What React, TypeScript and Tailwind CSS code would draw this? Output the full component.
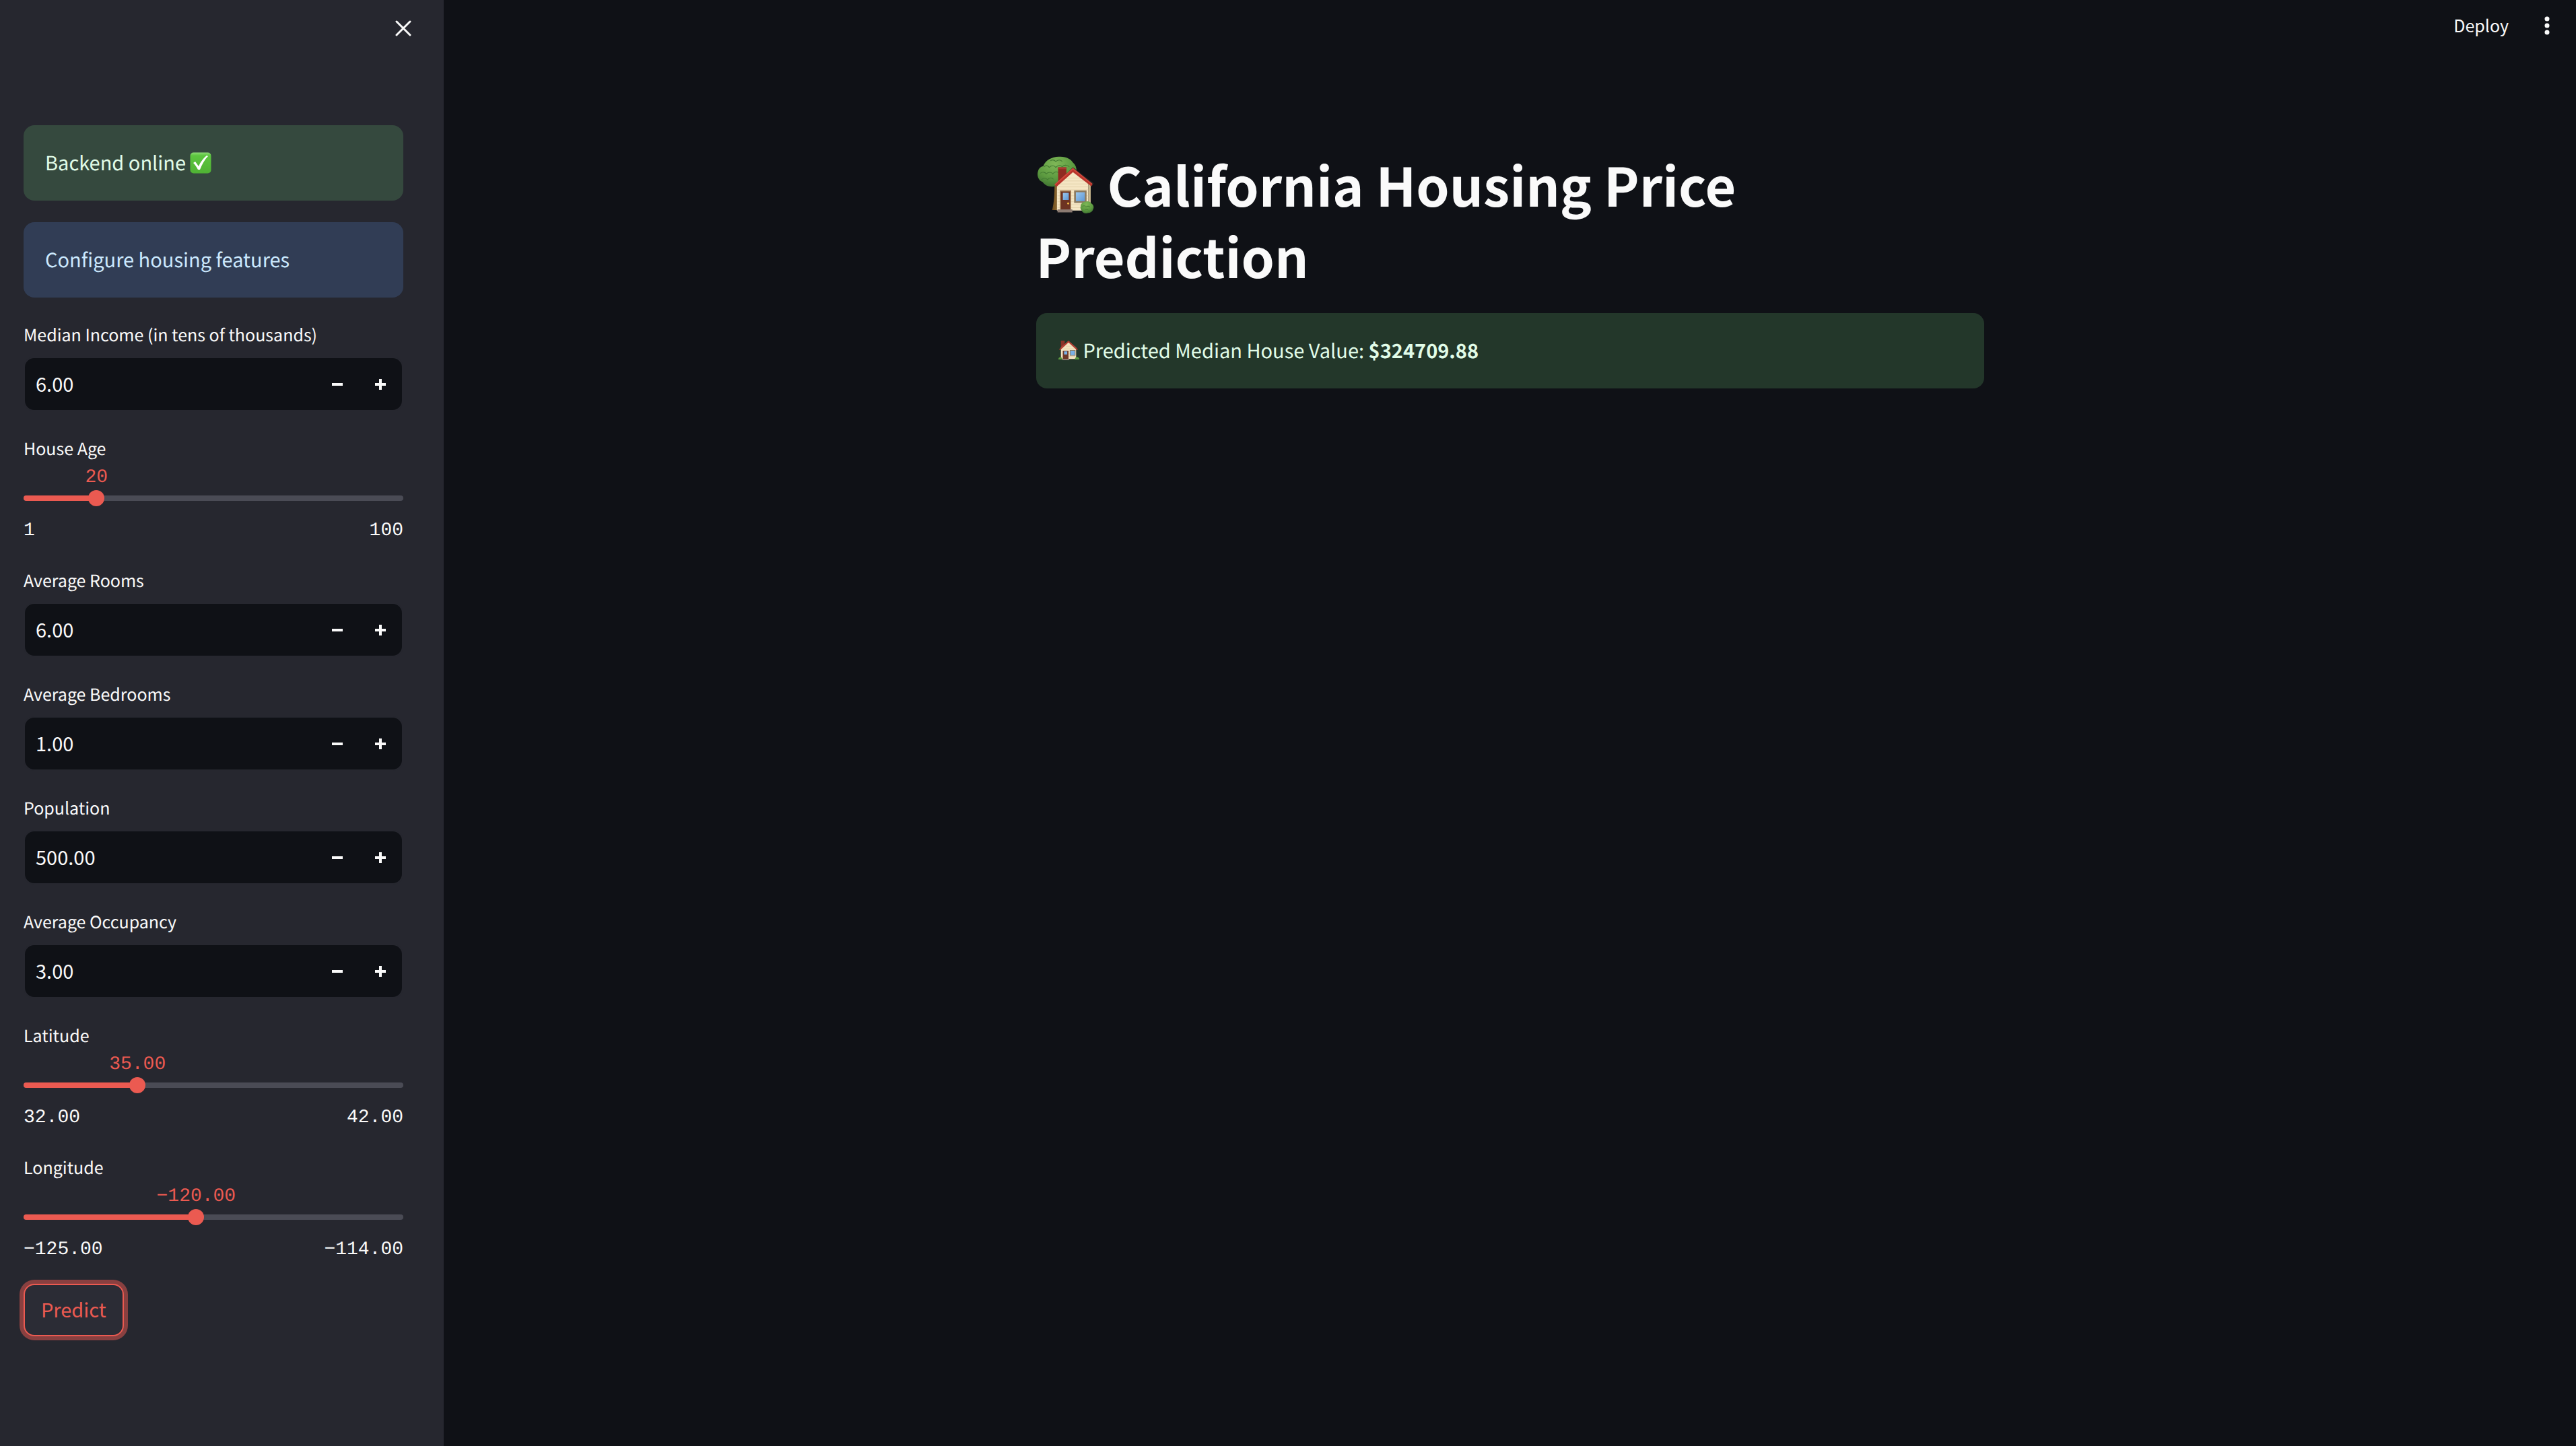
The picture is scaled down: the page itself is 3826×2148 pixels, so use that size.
import { useId, useState, type ReactNode } from "react";

function TreeHouseIcon() {
  return (
    <svg viewBox="0 0 100 100" className="mr-[18px] inline-block size-[88px] align-[-12px]" role="img" aria-label="House with garden">
      <defs>
        <radialGradient id="leaf" cx="0.45" cy="0.25" r="0.8">
          <stop offset="0" stopColor="#7fb757" />
          <stop offset="0.6" stopColor="#5c9a40" />
          <stop offset="1" stopColor="#3d7030" />
        </radialGradient>
        <linearGradient id="pane" x1="0" y1="0" x2="1" y2="1">
          <stop offset="0" stopColor="#9cc8ee" />
          <stop offset="1" stopColor="#5f98d6" />
        </linearGradient>
        <linearGradient id="trunk" x1="0" y1="0" x2="1" y2="0">
          <stop offset="0" stopColor="#6d4c1e" />
          <stop offset="1" stopColor="#a27a3c" />
        </linearGradient>
      </defs>
      <path d="M31 48h9v44H27c3-12 4-26 4-44z" fill="url(#trunk)" />
      <path
        d="M12 18C15 8 27 2 38 2c12-1 21 4 24 10 5 4 7 11 6 18-3 11-10 18-20 20-5 3-12 3-17 2-8 2-16-1-20-7C3 42 1 33 3 27c1-5 4-8 9-9z"
        fill="url(#leaf)"
      />
      <path
        d="M13 19c4-3 7-2 9 1 4-4 9-3 11 0 4-4 8-4 11-1 4-4 9-3 12 0M7 30c4-3 8-2 10 1 4-4 9-3 11 0 3-4 7-4 10-2M9 41c3-4 8-3 10 0 3-4 8-4 10-1M24 9c4-3 7-1 9 1 4-3 8-3 11 0"
        fill="none"
        stroke="#427a32"
        strokeWidth="1.2"
      />
      <path d="M37 20h14v14l-14 11z" fill="#8f2a22" />
      <path d="M37 20h14v3H37z" fill="#a93a30" />
      <path d="M62 20l35 27-3 5-6-3v42H35V47z" fill="#2b2626" />
      <path d="M35 46l27-22 26 22v47H35z" fill="#f5e6c4" />
      <path
        d="M46 38h32M40 43h44M36 48h52M36 53h52M36 58h52M36 63h52M36 68h52M36 73h52M36 78h52M36 83h52M36 88h52"
        stroke="#dfcda5"
        strokeWidth="0.9"
      />
      <path d="M88 46l4 2v40l-4 5z" fill="#c9b78e" />
      <path d="M31 49l31-28 33 27-2 4-31-24-28 25z" fill="#b8342b" />
      <path d="M31 49l31-28 33 27-1 1-32-25-30 26z" fill="#d4483c" />
      <path d="M40 59h19v33H40z" fill="#9b7350" />
      <path d="M42 61h15v31H42z" fill="#6d3322" />
      <path d="M45 63h10v12H45z" fill="url(#pane)" />
      <circle cx="54" cy="81" r="1.7" fill="#f0b840" />
      <path d="M64 59h21v21H64z" fill="#8c7a60" />
      <path d="M67 62h15v15H67z" fill="url(#pane)" />
      <path d="M36 91h25v5H36z" fill="#8c7b72" />
      <path
        d="M75 86c0-5 4-8 8-8 4-2 9 0 10 3 4 2 5 7 3 10-1 4-5 6-8 6-5 2-10 0-11-4-2-2-3-5-2-7z"
        fill="url(#leaf)"
      />
      <path d="M78 86c3-2 5-1 6 1 2-2 5-2 7 0M82 92c2-2 5-1 6 0" fill="none" stroke="#427a32" strokeWidth="1" />
    </svg>
  );
}

function HouseIcon() {
  return (
    <svg viewBox="0 0 34 34" className="mr-[6px] inline-block size-8 align-[-4px]" role="img" aria-label="House">
      <path d="M5 2h6v10l-6 5z" fill="#8a3128" />
      <path d="M5 13L17 3l12 10v18H5z" fill="#f3e2c0" />
      <path d="M13 11h9M9 15h17M7 19h21M7 23h21M7 27h21" stroke="#dcc99f" strokeWidth="0.6" />
      <path d="M2 16L17 2l15 14-2 1L17 5 4 17z" fill="#b3392f" />
      <path d="M8 18h9v13H8z" fill="#6d3826" />
      <path d="M10 19h5v5h-5z" fill="#79b0e4" />
      <path d="M19 17h9v9h-9z" fill="#8e7a5c" />
      <path d="M20 18h7v7h-7z" fill="#79b0e4" />
      <path d="M7 31h11v2H7z" fill="#8c7b72" />
      <path d="M1 32c0-4 4-5 6-2v2zM27 32c0-4 4-6 7-2v2z" fill="#5c9a40" />
    </svg>
  );
}

function CheckIcon() {
  return (
    <svg viewBox="0 0 32 32" className="ml-[6px] inline-block size-8 align-[-5px]" role="img" aria-label="OK">
      <defs>
        <linearGradient id="ok" x1="0" y1="0" x2="0" y2="1">
          <stop offset="0" stopColor="#8ddc74" />
          <stop offset="0.15" stopColor="#5cc53f" />
          <stop offset="1" stopColor="#4fb234" />
        </linearGradient>
      </defs>
      <rect x="0.5" y="0.5" width="31" height="31" rx="5" fill="url(#ok)" />
      <path d="M5 16l3-2 5 7C16 14 20 9 25 5l2 1c-5 5-9 12-12 20h-3C10 22 8 19 5 16z" fill="#fff" />
    </svg>
  );
}

function Alert({ tone, children }: { tone: "success" | "info"; children: ReactNode }) {
  const colors =
    tone === "success" ? "bg-[#73d47f]/20 text-[#e1fce8]" : "bg-[#527fc7]/25 text-[#cbe8fd]";
  return (
    <div role="status" className={`rounded-2xl px-8 pt-[31px] pb-[33px] text-[29px] leading-[48px] ${colors}`}>
      {children}
    </div>
  );
}

function NumberField({ label, initial, step }: { label: string; initial: string; step: number }) {
  const id = useId();
  const [value, setValue] = useState(initial);
  const shift = (by: number) => setValue((Number(value) + by).toFixed(2));
  return (
    <div>
      <label htmlFor={id} className="block pb-[2px] text-[25px] leading-[46px]">
        {label}
      </label>
      <div className="mt-2 flex h-[81px] overflow-hidden rounded-2xl border-2 border-[#26272f] bg-[#0f1116]">
        <input
          id={id}
          type="number"
          step="0.01"
          value={value}
          onChange={(e) => setValue(e.target.value)}
          className="min-w-0 flex-1 bg-transparent px-4 pb-1 text-[29px] leading-[48px] outline-none [appearance:textfield] [&::-webkit-inner-spin-button]:appearance-none"
        />
        <button type="button" aria-label={`Decrease ${label}`} onClick={() => shift(-step)} className="flex w-16 items-center justify-center">
          <svg viewBox="0 0 16 16" className="size-4" aria-hidden="true">
            <path d="M0 8h16" stroke="currentColor" strokeWidth="4" />
          </svg>
        </button>
        <button type="button" aria-label={`Increase ${label}`} onClick={() => shift(step)} className="flex w-16 items-center justify-center">
          <svg viewBox="0 0 16 16" className="size-4" aria-hidden="true">
            <path d="M0 8h16M8 0v16" stroke="currentColor" strokeWidth="4" />
          </svg>
        </button>
      </div>
    </div>
  );
}

function SliderField({
  label,
  min,
  max,
  initial,
  digits,
}: {
  label: string;
  min: number;
  max: number;
  initial: number;
  digits: number;
}) {
  const id = useId();
  const [value, setValue] = useState(initial);
  const percent = `${((value - min) / (max - min)) * 100}%`;
  const show = (n: number) => n.toFixed(digits).replace("-", "−");
  return (
    <div>
      <label htmlFor={id} className="block pb-[2px] text-[25px] leading-[46px]">
        {label}
      </label>
      <div className="relative h-9 font-['Liberation_Mono',monospace] text-[28px] leading-[38px] text-[#eb5a51]">
        <output htmlFor={id} className="absolute -translate-x-1/2" style={{ left: percent }}>
          {show(value)}
        </output>
      </div>
      <div className="relative mt-px flex h-6 items-center">
        <div className="h-2 w-full overflow-hidden rounded bg-[#4a4b55]">
          <div className="h-full bg-[#eb5a51]" style={{ width: percent }} />
        </div>
        <input
          id={id}
          type="range"
          min={min}
          max={max}
          step={digits ? 0.01 : 1}
          value={value}
          onChange={(e) => setValue(Number(e.target.value))}
          className="absolute -inset-x-3 h-6 cursor-pointer appearance-none bg-transparent outline-none [&::-webkit-slider-thumb]:size-6 [&::-webkit-slider-thumb]:appearance-none [&::-webkit-slider-thumb]:rounded-full [&::-webkit-slider-thumb]:bg-[#eb5a51]"
        />
      </div>
      <div className="mt-[18px] flex justify-between font-['Liberation_Mono',monospace] text-[28px] leading-[37px]">
        <span>{show(min)}</span>
        <span>{show(max)}</span>
      </div>
    </div>
  );
}

function Sidebar() {
  return (
    <aside className="w-[659px] shrink-0 bg-[#26272f] pr-[60px] pb-24 pl-[35px]">
      <div className="flex h-[186px] justify-end pt-[30px]">
        <button type="button" aria-label="Close sidebar" className="-mr-3 size-6">
          <svg viewBox="0 0 24 24" className="size-6" aria-hidden="true">
            <path d="M2 2l20 20M22 2L2 22" stroke="currentColor" strokeWidth="3" strokeLinecap="round" />
          </svg>
        </button>
      </div>
      <form className="flex flex-col gap-8" onSubmit={(e) => e.preventDefault()}>
        <Alert tone="success">
          Backend online
          <CheckIcon />
        </Alert>
        <Alert tone="info">Configure housing features</Alert>
        <NumberField label="Median Income (in tens of thousands)" initial="6.00" step={0.01} />
        <SliderField label="House Age" min={1} max={100} initial={20} digits={0} />
        <NumberField label="Average Rooms" initial="6.00" step={0.01} />
        <NumberField label="Average Bedrooms" initial="1.00" step={0.01} />
        <NumberField label="Population" initial="500.00" step={0.01} />
        <NumberField label="Average Occupancy" initial="3.00" step={0.01} />
        <SliderField label="Latitude" min={32} max={42} initial={35} digits={2} />
        <SliderField label="Longitude" min={-125} max={-114} initial={-120} digits={2} />
        <button
          type="submit"
          className="h-[78px] self-start rounded-2xl border-2 border-[#eb5a51] bg-[#2b2c35] px-6 pb-1 text-[29px] leading-[48px] text-[#eb5a51] ring-6 ring-[#eb5a51]/50"
        >
          Predict
        </button>
      </form>
    </aside>
  );
}

export default function App() {
  return (
    <div className="flex min-h-screen bg-[#0f1116] font-['Noto_Sans_CJK_SC',sans-serif] text-[#fafafa] [text-rendering:geometricPrecision]">
      <Sidebar />
      <div className="flex min-w-0 flex-1 flex-col">
        <header className="flex h-[76px] items-center justify-end gap-11 pr-8">
          <button type="button" className="pb-[2px] text-[25px] leading-[48px]">
            Deploy
          </button>
          <button type="button" aria-label="Main menu" className="h-7 w-6">
            <svg viewBox="0 0 24 28" className="h-7 w-6" fill="currentColor" aria-hidden="true">
              <circle cx="13" cy="4" r="3.5" />
              <circle cx="13" cy="14" r="3.5" />
              <circle cx="13" cy="24" r="3.5" />
            </svg>
          </button>
        </header>
        <main className="mx-auto w-full max-w-[1408px] pt-36">
          <h1 className="mb-[33px] text-[79px] leading-[106px] font-bold">
            <TreeHouseIcon />
            California Housing Price Prediction
          </h1>
          <Alert tone="success">
            <HouseIcon />
            Predicted Median House Value: <strong>$324709.88</strong>
          </Alert>
        </main>
      </div>
    </div>
  );
}
